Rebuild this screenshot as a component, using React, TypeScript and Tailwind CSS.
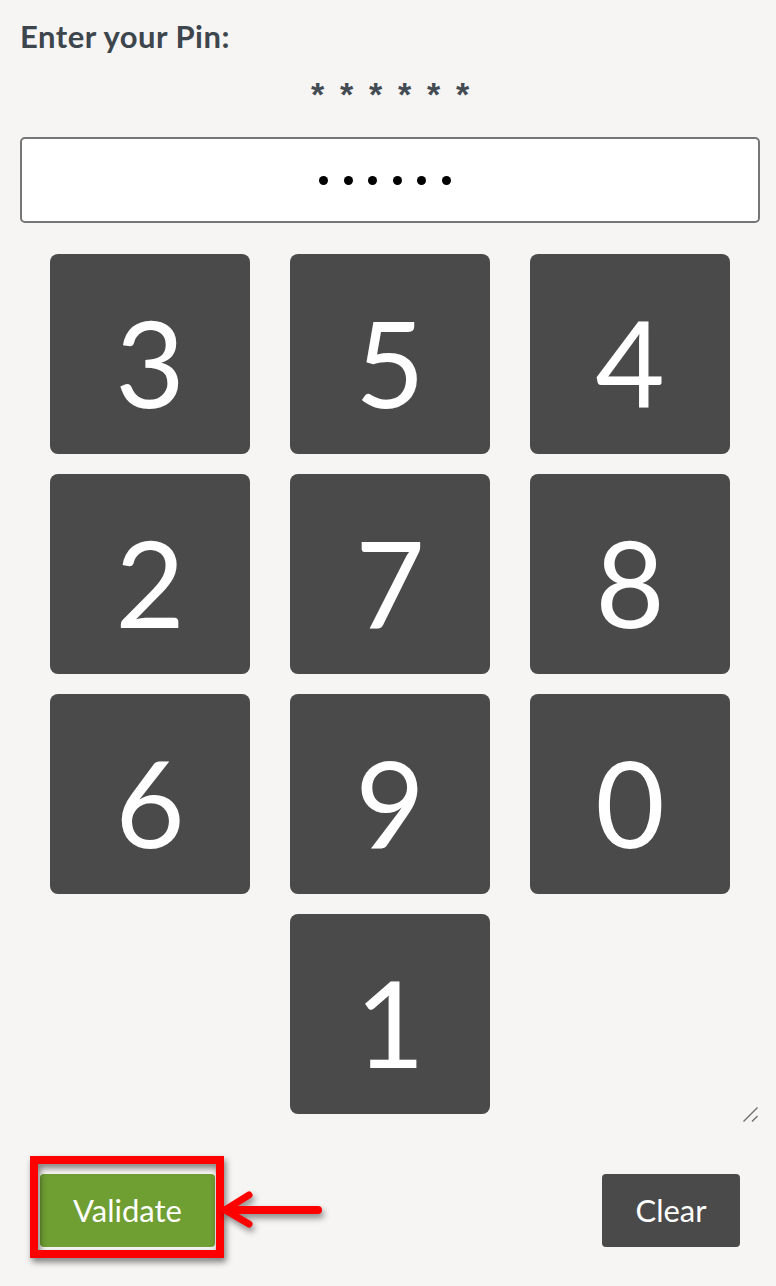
const rows: (string | null)[][] = [
  ["3", "5", "4"],
  ["2", "7", "8"],
  ["6", "9", "0"],
  [null, "1", null],
]

export default function App() {
  return (
    <div className="relative w-[776px] h-[1286px] overflow-hidden bg-[#f6f5f3] font-['Lato',sans-serif]">
      <div className="pl-5 pr-4 pt-[18px]">
        <h1 className="text-[31px] leading-[36px] font-bold tracking-[0.5px] text-[#3d454d]">Enter your Pin:</h1>

        <div className="mt-5 flex justify-center gap-[14px] h-[30px] text-[34px] leading-[40px] font-bold text-[#434b53] font-['Liberation_Sans',sans-serif]">
          {Array.from({ length: 6 }).map((_, i) => (
            <span key={i} className="w-[15px] text-center">*</span>
          ))}
        </div>

        <div className="mt-[33px] h-[86px] bg-white border-2 border-[#767676] rounded-[5px] flex items-center justify-center pr-[10px]">
          <div className="flex gap-[15.5px]">
            {Array.from({ length: 6 }).map((_, i) => (
              <span key={i} className="w-[9px] h-[9px] rounded-full bg-black" />
            ))}
          </div>
        </div>

        {/* keypad */}
        <div className="relative mt-[31px] pb-[10px]">
          <div className="grid grid-cols-[repeat(3,200px)] gap-x-10 gap-y-5 justify-center">
            {rows.flat().map((d, i) =>
              d === null ? (
                <div key={i} />
              ) : (
                <button
                  key={i}
                  className="h-[200px] w-[200px] rounded-[8px] bg-[#4a4a4a] text-white text-[120px] leading-none font-normal flex items-center justify-center pt-4"
                >
                  {d}
                </button>
              )
            )}
          </div>
          <svg className="absolute right-[2px] bottom-[2px]" width="15" height="15" viewBox="0 0 15 15">
            <path d="M0.5 14.5 L14.5 0.5 M9 14.5 L14.5 9" stroke="#6f6f6f" strokeWidth="1.4" fill="none" />
          </svg>
        </div>

        <div className="mt-[50px] px-5 flex justify-between">
          <button className="w-[175px] h-[73px] rounded-[4px] bg-[#6f9e33] text-white text-[31px] font-normal">
            Validate
          </button>
          <button className="w-[138px] h-[73px] rounded-[4px] bg-[#4a4a4a] text-white text-[31px] font-normal">
            Clear
          </button>
        </div>
      </div>

      {/* annotation: red highlight box and arrow */}
      <div className="absolute left-[30px] top-[1156px] w-[194px] h-[102px] border-[8px] border-[#ff0000] drop-shadow-[2px_4px_3px_rgba(0,0,0,0.5)]" />
      <svg
        className="absolute left-[216px] top-[1186px] drop-shadow-[2px_4px_3px_rgba(0,0,0,0.45)]"
        width="112"
        height="50"
        viewBox="0 0 112 50"
      >
        <path d="M10 24 L102 24" stroke="#ff0000" strokeWidth="8" strokeLinecap="round" fill="none" />
        <path d="M33 9 L9 24 L33 38" stroke="#ff0000" strokeWidth="7" strokeLinecap="round" strokeLinejoin="round" fill="none" />
      </svg>
    </div>
  )
}
